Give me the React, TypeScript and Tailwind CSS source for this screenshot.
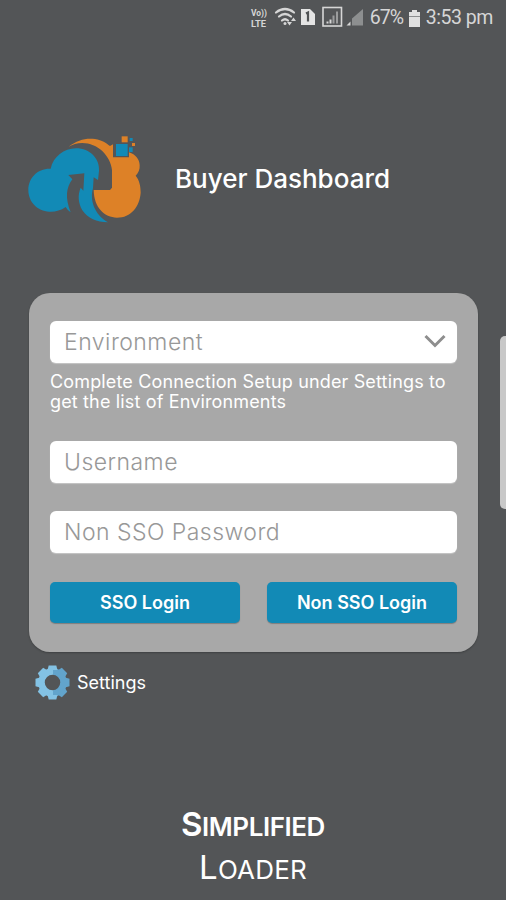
import { useState } from "react";

function StatusBar() {
  return (
    <div className="flex h-9 items-center justify-end pr-[13px] text-[#d6d6d6]">
      <svg width="120" height="36" viewBox="0 0 120 36" fill="none">
        {/* VoLTE */}
        <g fill="#d6d6d6" fontFamily="Roboto, sans-serif" fontSize="8.500" fontWeight="700">
          <text x="3" y="16" textLength="16" lengthAdjust="spacingAndGlyphs">Vo))</text>
          <text x="3" y="26.500" textLength="15" lengthAdjust="spacingAndGlyphs">LTE</text>
        </g>
        {/* Wifi */}
        <g stroke="#d6d6d6" strokeWidth="2.200" strokeLinecap="round">
          <path d="M28 12.500Q37 5.500 46 12.500" />
          <path d="M31 16.500Q37 11.500 43 16.500" />
          <path d="M34 20.500Q37 18 40 20.500" />
        </g>
        <circle cx="37" cy="23.500" r="1.500" fill="#d6d6d6" />
        <path d="M39 22h5l-2.500 3.500zM43 21l2.500-3.500 2.500 3.500z" fill="#d6d6d6" />
        {/* Sim */}
        <path d="M53 9h9l5 5v11H53z" fill="#e4e4e4" />
        <path d="M58 13.500l2-1v9" stroke="#505254" strokeWidth="2.200" />
        {/* Boxed signal */}
        <rect x="75" y="7.500" width="18.500" height="18.500" stroke="#d6d6d6" strokeWidth="1.600" />
        <path d="M79.500 23.500v-2M82.500 23.500v-4" stroke="#d6d6d6" strokeWidth="2" />
        <path d="M85.500 23.500v-8M89 23.500v-12" stroke="#9b9c9d" strokeWidth="2" />
        {/* Signal */}
        <path d="M98.500 25.500l4-4v4z" fill="#d6d6d6" />
        <path d="M104 25.500v-7L115 9v16.500z" fill="#8d8f90" />
      </svg>
      <span className="ml-0.5 w-[34px] whitespace-nowrap font-[Roboto,sans-serif] text-[19.500px] leading-9 tracking-[-0.900px]">67%</span>
      <svg className="ml-[4px] shrink-0" width="13" height="19" viewBox="0 0 13 19">
        <path d="M4 1h5v2h3v15H1V3h3z" fill="#e0e0e0" />
        <path d="M1 7.500h11" stroke="#8b8d8e" />
      </svg>
      <span className="ml-[5px] whitespace-nowrap font-[Roboto,sans-serif] text-[19.500px] leading-9 tracking-[-0.450px]">3:53 pm</span>
    </div>
  );
}

function CloudLogo() {
  return (
    <svg width="135" height="105" viewBox="0 0 405 315" className="shrink-0">
      {/* Orange cloud */}
      <path
        fill="#dd8127"
        d="M146 65C172 45 198 38 225 42C247 46 258 54 270 63L279 58V97H327V82C347 88 358 103 359 120C360 134 355 143 347 152C358 165 362 183 362 203C359 245 333 278 291 278C253 277 222 248 221 195H270L276 188V135C272 92 232 54 187 54C170 54 158 59 146 65Z"
      />
      {/* Blue cloud */}
      <path
        fill="#128ab6"
        d="M92 131C100 95 132 70 168 70C210 70 240 102 237 138L234 165L221 157L219 190C209 225 222 268 264 292C230 292 203 280 187 256C174 232 173 210 182 188L190 197L193 145L145 150L157 163C138 188 135 220 152 262C145 257 140 251 137 246C122 257 104 261 88 260C52 259 25 230 25 195C25 158 54 129 92 131Z"
      />
      {/* Pixels */}
      <rect x="288" y="57" width="35" height="36" fill="#128ab6" />
      <rect x="305" y="34" width="18" height="18" fill="#dd8127" />
      <rect x="329" y="39" width="9" height="9" fill="#128ab6" />
      <rect x="336" y="54" width="9" height="9" fill="#dd8127" />
      <rect x="327" y="67" width="11" height="14" fill="#128ab6" />
    </svg>
  );
}

function Gear() {
  const teeth = [0, 45, 90, 135, 180, 225, 270, 315];
  return (
    <svg width="35" height="35" viewBox="-17.5 -17.5 35 35">
      <defs>
        <linearGradient id="gear" x1="-17" x2="17" y1="0" y2="0" gradientUnits="userSpaceOnUse">
          <stop offset="0.5" stopColor="#83c2e4" />
          <stop offset="0.5" stopColor="#62a4cc" />
        </linearGradient>
      </defs>
      <circle r="11" fill="none" stroke="url(#gear)" strokeWidth="6.500" />
      {teeth.map((angle) => (
        <path
          key={angle}
          d="M-5-12.500L-3.800-17H3.800L5-12.500z"
          transform={`rotate(${angle})`}
          fill={angle > 0 && angle < 180 ? "#62a4cc" : "#83c2e4"}
        />
      ))}
    </svg>
  );
}

const inputClass =
  "block h-[42px] w-full rounded-[6px] bg-white px-3.5 text-[23px] font-light tracking-[0.470px] text-[#8e8e8e] placeholder:text-[#989898] shadow-[0_1px_1px_rgba(255,255,255,0.35)] outline-none";

const buttonClass =
  "h-[41px] w-[190px] rounded-[5px] bg-[#128ab6] pb-px text-[18px] font-semibold text-white shadow-[0_1px_1px_rgba(0,0,0,0.25)] cursor-pointer";

export default function App() {
  const [username, setUsername] = useState("");
  const [password, setPassword] = useState("");

  return (
    <div className="relative flex h-[900px] w-[506px] flex-col overflow-hidden bg-[#535557] font-[Inter,sans-serif] text-white">
      <StatusBar />

      <header className="mt-[89px] flex h-[105px] items-center pl-5">
        <CloudLogo />
        <h1 className="ml-5 mt-[3px] whitespace-nowrap text-[26px] font-medium leading-8">Buyer Dashboard</h1>
      </header>

      <main className="mx-[29px] mt-[63px] h-[359px] w-[449px] rounded-[21px] bg-[#a8a8a8] px-[21px] pt-7 shadow-[0_1px_2px_rgba(0,0,0,0.25)]">
        <button className={`${inputClass} flex items-center justify-between pr-[11px]`}>
          <span className="text-[#989898]">Environment</span>
          <svg className="-mt-0.5" width="22" height="14" viewBox="0 0 22 14" fill="none" stroke="#8e8e8e" strokeWidth="3">
            <path d="M1.500 2L11 11.500L20.500 2" />
          </svg>
        </button>
        <p className="mt-[9px] whitespace-nowrap text-[18px] leading-5 tracking-[0.150px]">
          Complete Connection Setup under Settings to
          <br />
          get the list of Environments
        </p>
        <input
          className={`${inputClass} mt-[29px]`}
          placeholder="Username"
          value={username}
          onChange={(e) => setUsername(e.target.value)}
        />
        <input
          className={`${inputClass} mt-7`}
          type="password"
          placeholder="Non SSO Password"
          value={password}
          onChange={(e) => setPassword(e.target.value)}
        />
        <div className="mt-[29px] flex justify-between">
          <button className={buttonClass}>SSO Login</button>
          <button className={buttonClass}>Non SSO Login</button>
        </div>
      </main>

      <div className="mt-[13px] flex items-center pl-[35px]">
        <Gear />
        <span className="ml-[7px] text-[18px] leading-6">Settings</span>
      </div>

      <footer className="mt-[104px] flex flex-col items-center text-[33px] leading-[40px]">
        <div className="font-semibold tracking-[-0.450px]">
          S<span className="text-[26px]">IMPLIFIED</span>
        </div>
        <div className="tracking-[0.200px]">
          L<span className="text-[26px]">OADER</span>
        </div>
      </footer>

      {/* Edge panel handle */}
      <div className="absolute right-0 top-[336px] h-[173px] w-1.5 rounded-l-[5px] bg-[#c8c8c8]" />
    </div>
  );
}
